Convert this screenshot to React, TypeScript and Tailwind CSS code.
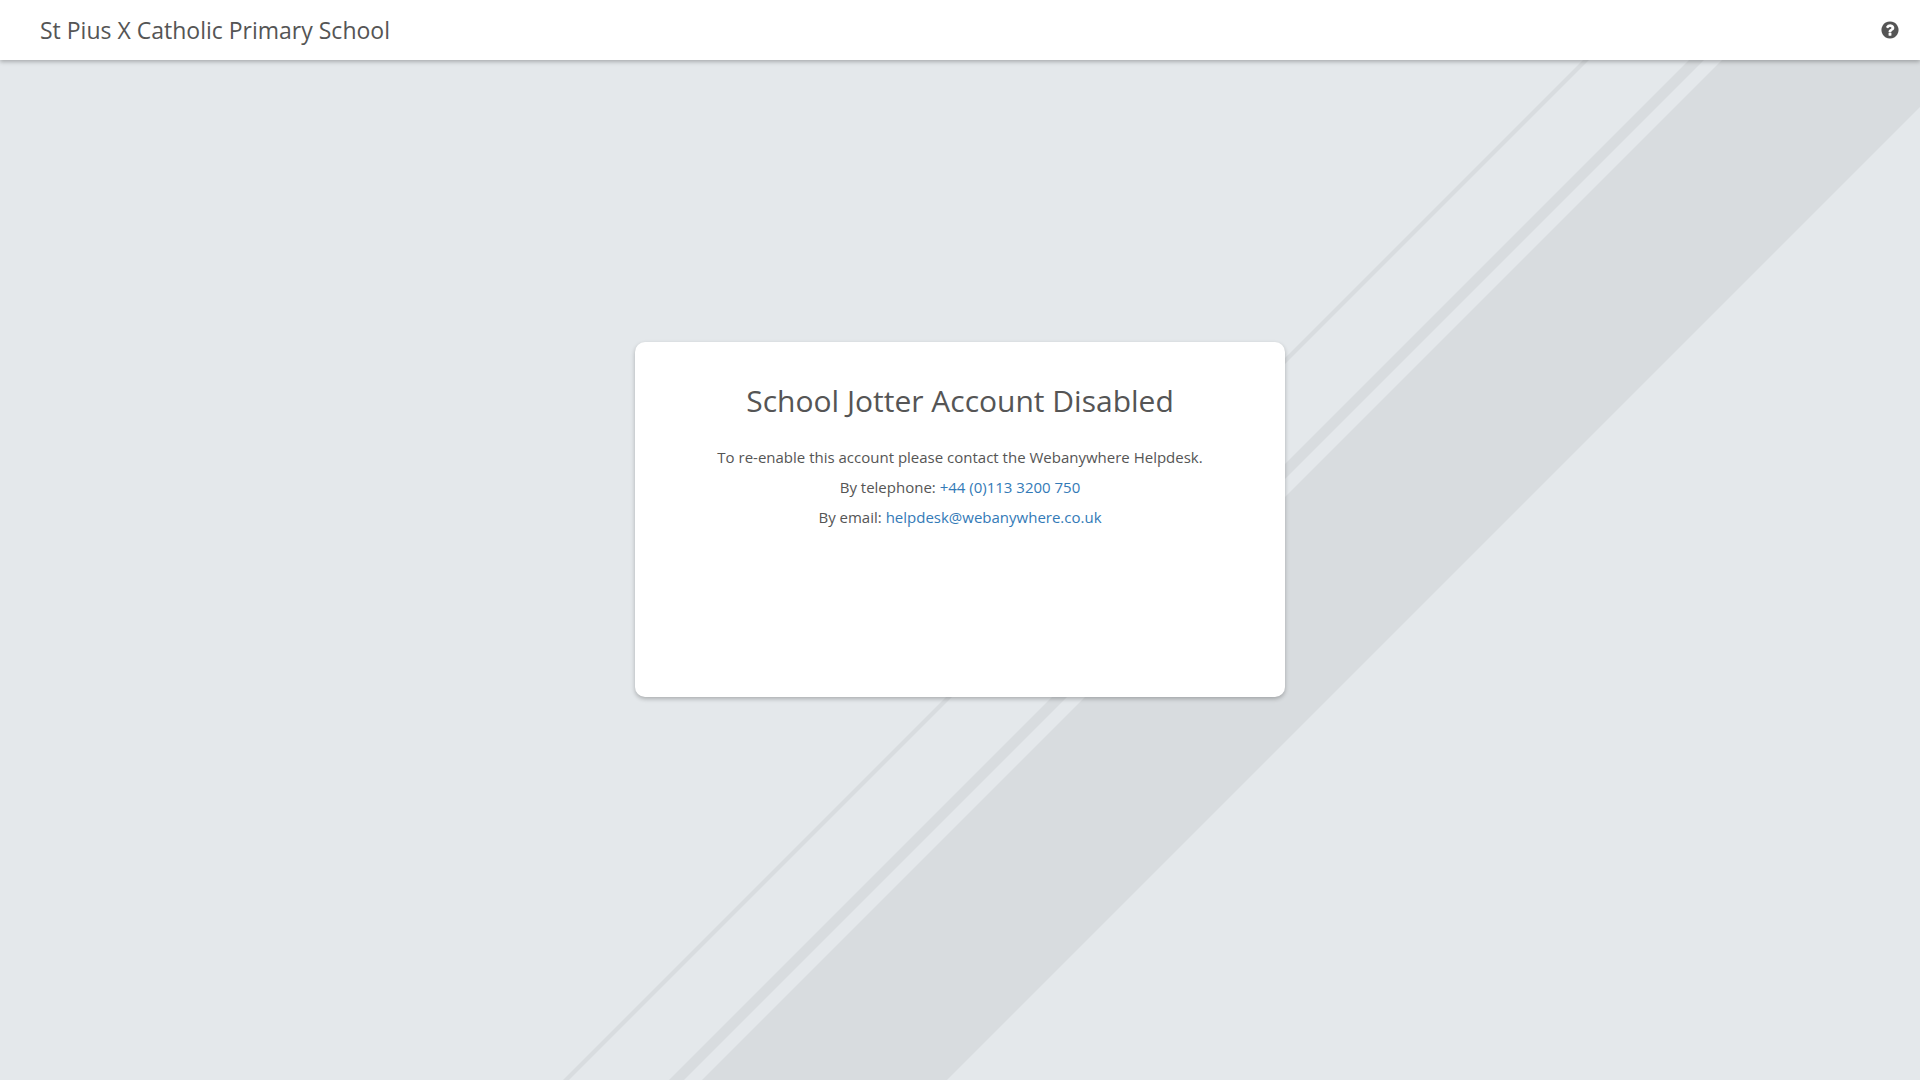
import React from "react";

const SCHOOL_NAME = "St Pius X Catholic Primary School";
const PHONE = "+44 (0)113 3200 750";
const EMAIL = "helpdesk@webanywhere.co.uk";

function HelpIcon() {
  return (
    <svg viewBox="0 0 1792 1792" className="size-5" fill="currentColor" aria-hidden="true">
      <path d="M1024 1376v-192q0-14-9-23t-23-9h-192q-14 0-23 9t-9 23v192q0 14 9 23t23 9h192q14 0 23-9t9-23zm256-672q0-88-55.5-163t-138.5-116-170-41q-243 0-371 213-15 24 8 42l132 100q7 6 19 6 16 0 25-12 53-68 86-92 34-24 86-24 48 0 85.5 26t37.5 59q0 38-20 61t-68 45q-63 28-115.5 86.5t-52.5 125.5v36q0 14 9 23t23 9h192q14 0 23-9t9-23q0-19 21.5-49.5t54.5-49.5q32-18 49-28.5t46-35 44.5-48 28-60.5 12.5-81zm384 192q0 209-103 385.5t-279.5 279.5-385.5 103-385.5-103-279.5-279.5-103-385.5 103-385.5 279.5-279.5 385.5-103 385.5 103 279.5 279.5 103 385.5z" />
    </svg>
  );
}

// diagonal stripes behind the page, scaled to cover the window
function Backdrop() {
  return (
    <svg
      viewBox="0 0 1920 1080"
      preserveAspectRatio="xMidYMid slice"
      className="absolute inset-0 -z-10 h-full w-full"
      fill="#d8dcdf"
      aria-hidden="true"
    >
      <path d="M1643 0h6L569 1080h-6z" />
      <path d="M1749 0h15L684 1080h-15z" />
      <path d="M1782 0h245L947 1080H702z" />
    </svg>
  );
}

function Header() {
  return (
    <header className="flex h-[60px] items-center justify-between bg-white pr-5 pl-10 shadow-[0_2px_4px_rgba(0,0,0,0.25)]">
      <h1 className="text-[23px] leading-8">{SCHOOL_NAME}</h1>
      <button type="button" aria-label="Help" className="cursor-pointer">
        <HelpIcon />
      </button>
    </header>
  );
}

export default function App() {
  return (
    <div className="relative isolate flex min-h-screen flex-col overflow-hidden bg-[#e4e8eb] font-['Open_Sans',sans-serif] text-[#555]">
      <Backdrop />
      <Header />

      <main className="flex flex-1 items-center justify-center px-4 pb-[101px]">
        <section className="min-h-[355px] w-full max-w-[650px] rounded-[10px] bg-white px-10 pt-10 text-center shadow-[0_2px_4px_rgba(0,0,0,0.25)]">
          <h2 className="mb-[22px] text-[30px] leading-[38px]">School Jotter Account Disabled</h2>
          <div className="text-[15px] leading-[30px]">
            <p>To re-enable this account please contact the Webanywhere Helpdesk.</p>
            <p>
              By telephone:{" "}
              <a href="tel:+441133200750" className="text-[#337ab7]">
                {PHONE}
              </a>
            </p>
            <p>
              By email:{" "}
              <a href={`mailto:${EMAIL}`} className="text-[#337ab7]">
                {EMAIL}
              </a>
            </p>
          </div>
        </section>
      </main>
    </div>
  );
}
